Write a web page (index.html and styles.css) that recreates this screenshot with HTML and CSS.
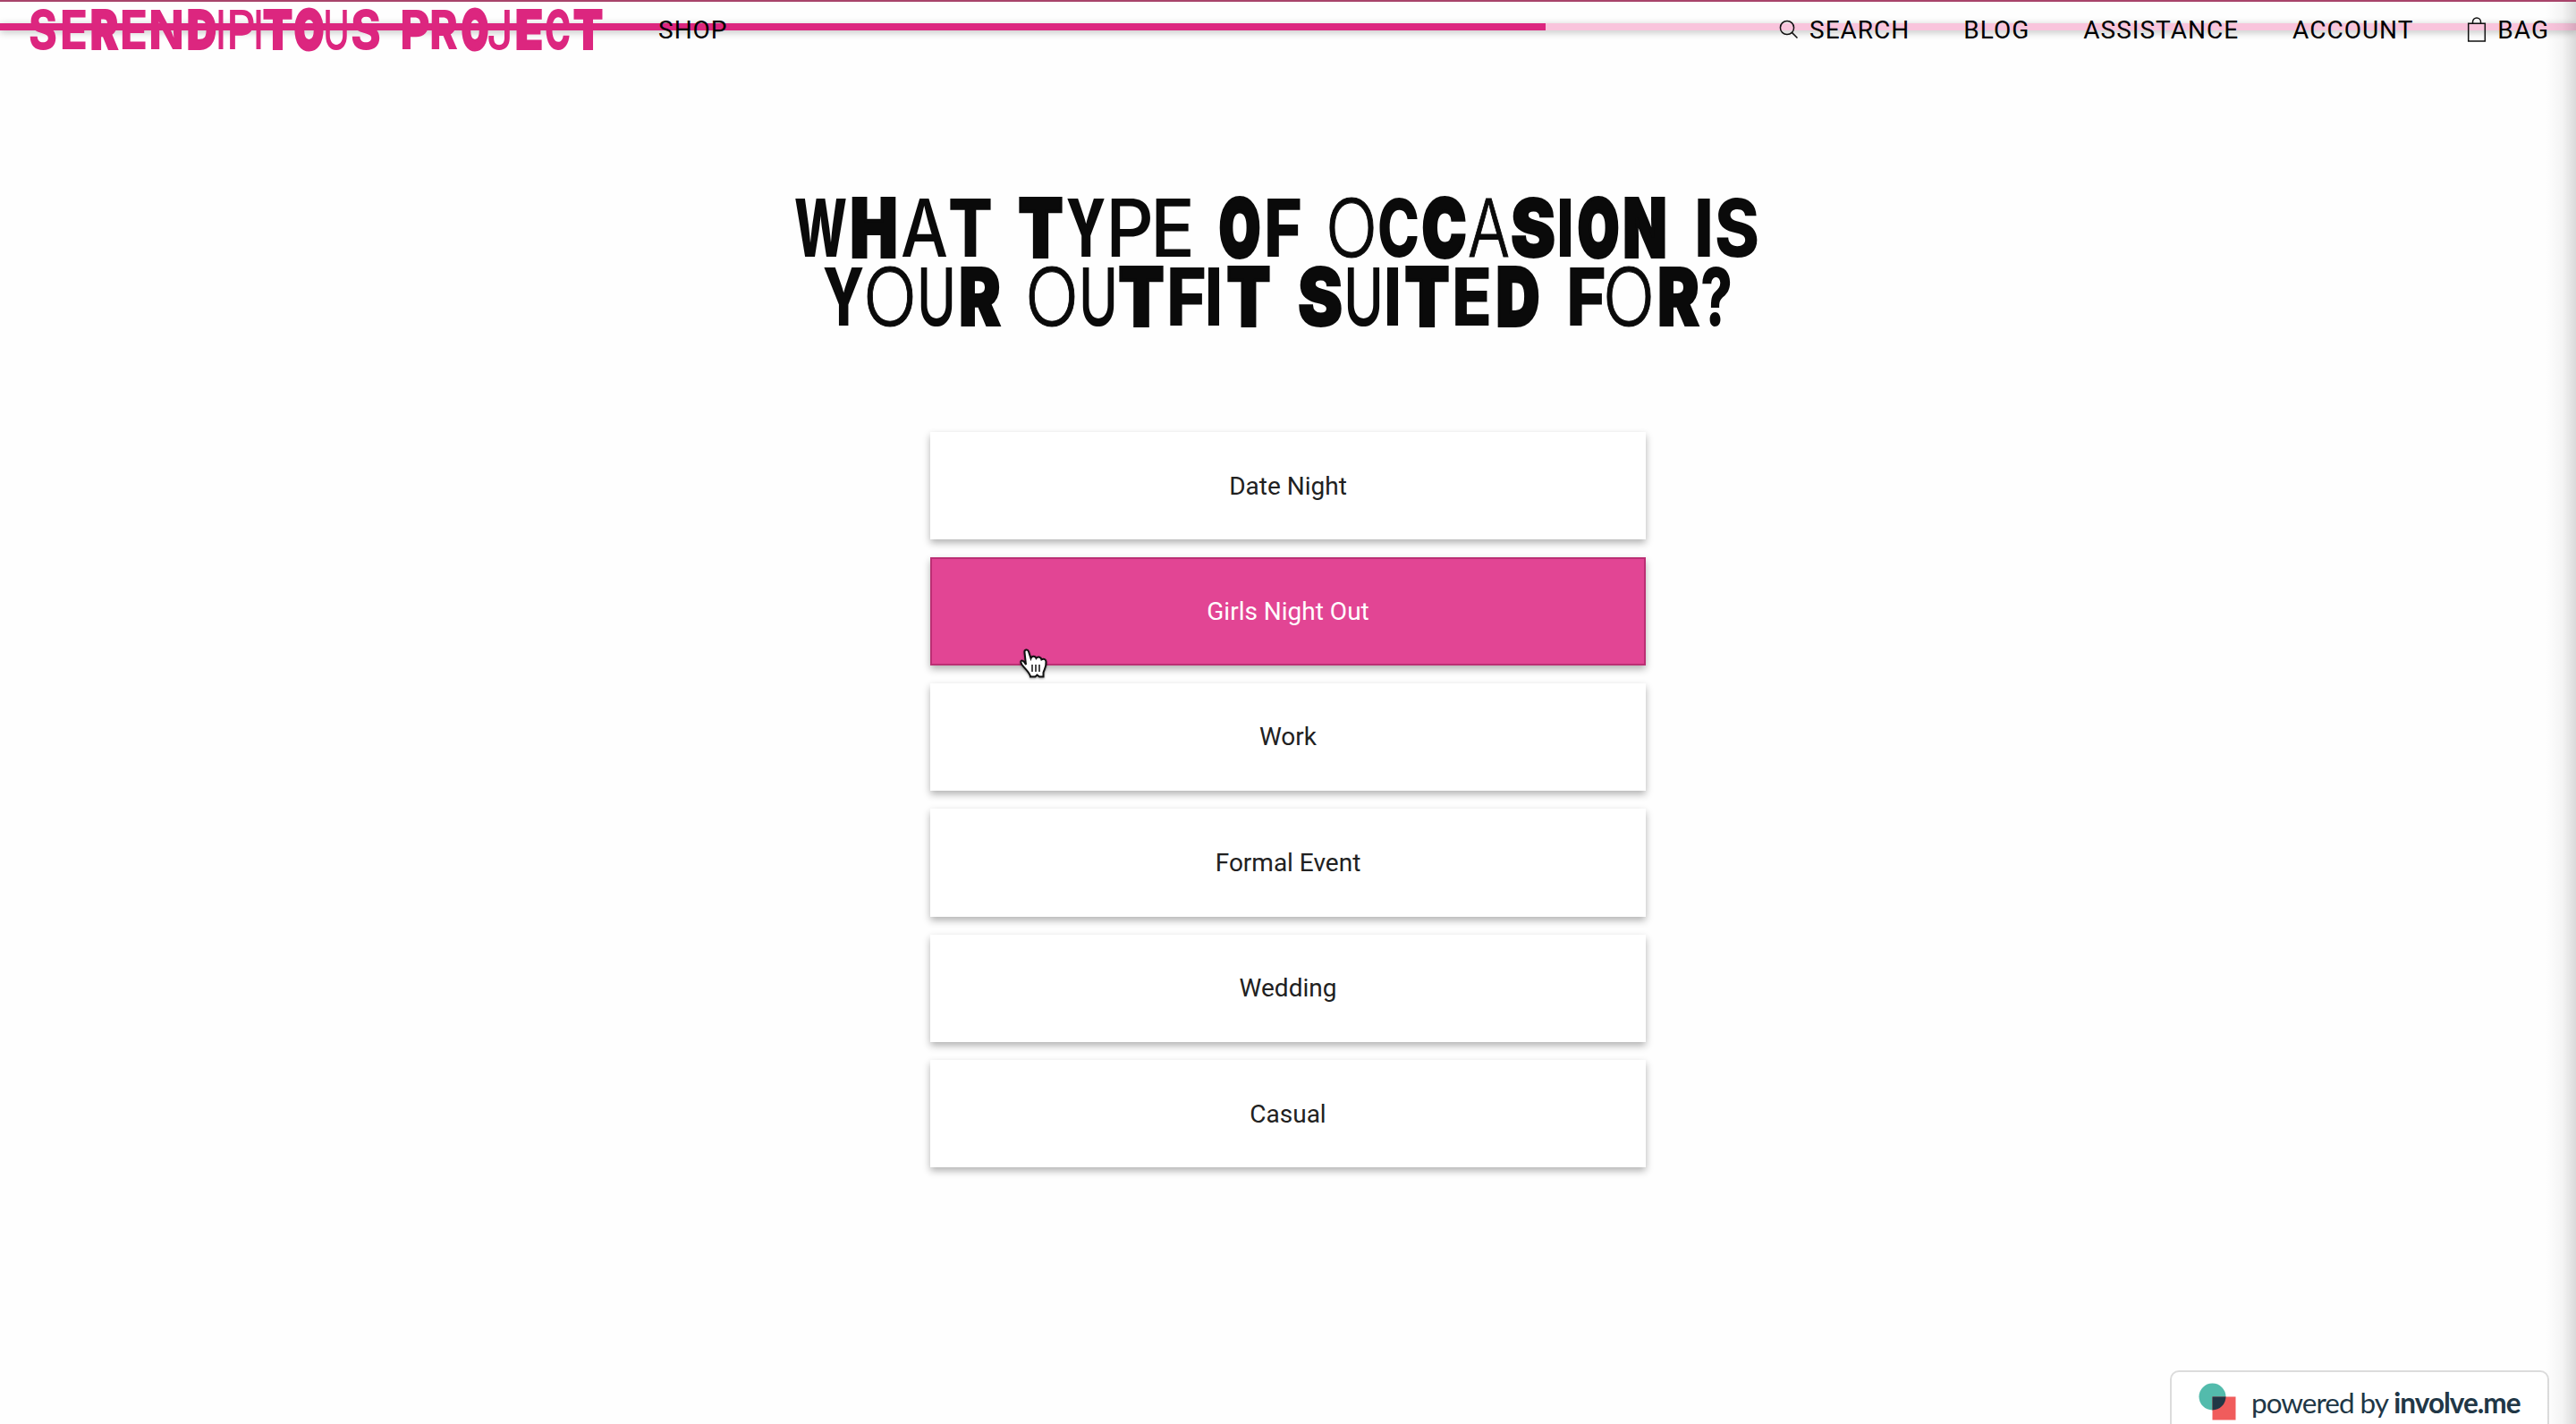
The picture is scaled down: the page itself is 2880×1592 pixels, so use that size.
FILE: index.html
```html
<!DOCTYPE html>
<html lang="en">
  <head>
    <meta charset="UTF-8" />
    <meta name="viewport" content="width=device-width, initial-scale=1.0" />
    <title>Serendipitous Project</title>
    <link rel="stylesheet" href="styles.css">
  </head>
  <body>
    <div class="progress">
      <div class="progress-value"></div>
    </div>

    <header class="navbar">
      <a class="logo" href="#">
        <svg class="lettering" width="660" height="66" viewBox="0 0 660 66">
          <text y="53">
            <tspan class="bold" x="32" textLength="32" lengthAdjust="spacingAndGlyphs">S</tspan><tspan class="bold" x="67" textLength="31" lengthAdjust="spacingAndGlyphs">E</tspan><tspan class="fat" x="101" textLength="31" lengthAdjust="spacingAndGlyphs">R</tspan><tspan class="bold" x="134" textLength="31" lengthAdjust="spacingAndGlyphs">E</tspan><tspan class="bold" x="166" textLength="40" lengthAdjust="spacingAndGlyphs">N</tspan><tspan class="fat" x="209" textLength="33" lengthAdjust="spacingAndGlyphs">D</tspan><tspan class="medium" x="241" textLength="12" lengthAdjust="spacingAndGlyphs">I</tspan><tspan class="medium" x="253" textLength="33" lengthAdjust="spacingAndGlyphs">P</tspan><tspan class="medium" x="283" textLength="12" lengthAdjust="spacingAndGlyphs">I</tspan><tspan class="fat" x="294" textLength="33" lengthAdjust="spacingAndGlyphs">T</tspan><tspan class="slab" x="329" textLength="33" lengthAdjust="spacingAndGlyphs">O</tspan><tspan class="medium" x="361" textLength="30" lengthAdjust="spacingAndGlyphs">U</tspan><tspan class="bold" x="392" textLength="34" lengthAdjust="spacingAndGlyphs">S</tspan>
            <tspan class="bold" x="447" textLength="34" lengthAdjust="spacingAndGlyphs">P</tspan><tspan class="bold" x="480" textLength="32" lengthAdjust="spacingAndGlyphs">R</tspan><tspan class="slab" x="516" textLength="30" lengthAdjust="spacingAndGlyphs">O</tspan><tspan class="medium" x="544" textLength="30" lengthAdjust="spacingAndGlyphs">J</tspan><tspan class="fat" x="576" textLength="31" lengthAdjust="spacingAndGlyphs">E</tspan><tspan class="bold" x="609" textLength="29" lengthAdjust="spacingAndGlyphs">C</tspan><tspan class="fat" x="641" textLength="33" lengthAdjust="spacingAndGlyphs">T</tspan>
          </text>
        </svg>
      </a>
      <nav class="nav-left">
        <a href="#">SHOP</a>
      </nav>
      <nav class="nav-right">
        <a href="#">
          <svg class="icon-search" width="22" height="22" viewBox="0 0 22 22">
            <circle cx="9" cy="9" r="7.6" />
            <path d="M14.4 14.4 L20.5 20.5" />
          </svg>
          SEARCH
        </a>
        <a href="#">BLOG</a>
        <a href="#">ASSISTANCE</a>
        <a href="#">ACCOUNT</a>
        <a href="#">
          <svg class="icon-bag" width="22" height="28" viewBox="0 0 22 28">
            <path d="M1.700 7.200 H20.300 V27 H1.700 Z M6.500 7 V5.500 A4.500 4.500 0 0 1 15.500 5.500 V7" />
          </svg>
          BAG
        </a>
      </nav>
    </header>

    <main class="quiz">
      <h1 class="question">
        <svg class="lettering" width="1100" height="160" viewBox="880 210 1100 160">
          <text y="287">
            <tspan class="bold" x="888" textLength="59" lengthAdjust="spacingAndGlyphs">W</tspan><tspan class="slab" x="951" textLength="52" lengthAdjust="spacingAndGlyphs">H</tspan><tspan class="medium" x="1007" textLength="53" lengthAdjust="spacingAndGlyphs">A</tspan><tspan class="bold" x="1060" textLength="50" lengthAdjust="spacingAndGlyphs">T</tspan>
            <tspan class="slab" x="1139" textLength="49" lengthAdjust="spacingAndGlyphs">T</tspan><tspan class="bold" x="1192" textLength="44" lengthAdjust="spacingAndGlyphs">Y</tspan><tspan class="medium" x="1236" textLength="54" lengthAdjust="spacingAndGlyphs">P</tspan><tspan class="medium" x="1286" textLength="50" lengthAdjust="spacingAndGlyphs">E</tspan>
            <tspan class="slab" x="1363" textLength="46" lengthAdjust="spacingAndGlyphs">O</tspan><tspan class="bold" x="1413" textLength="43" lengthAdjust="spacingAndGlyphs">F</tspan>
            <tspan class="thin" x="1482" textLength="58" lengthAdjust="spacingAndGlyphs">O</tspan><tspan class="bold" x="1540" textLength="47" lengthAdjust="spacingAndGlyphs">C</tspan><tspan class="slab" x="1590" textLength="49" lengthAdjust="spacingAndGlyphs">C</tspan><tspan class="thin" x="1641" textLength="47" lengthAdjust="spacingAndGlyphs">A</tspan><tspan class="fat" x="1689" textLength="50" lengthAdjust="spacingAndGlyphs">S</tspan><tspan class="bold" x="1740" textLength="20" lengthAdjust="spacingAndGlyphs">I</tspan><tspan class="slab" x="1764" textLength="46" lengthAdjust="spacingAndGlyphs">O</tspan><tspan class="slab" x="1815" textLength="48" lengthAdjust="spacingAndGlyphs">N</tspan>
            <tspan class="bold" x="1894" textLength="22" lengthAdjust="spacingAndGlyphs">I</tspan><tspan class="bold" x="1917" textLength="50" lengthAdjust="spacingAndGlyphs">S</tspan>
          </text>
          <text y="364">
            <tspan class="bold" x="920" textLength="46" lengthAdjust="spacingAndGlyphs">Y</tspan><tspan class="thin" x="965" textLength="60" lengthAdjust="spacingAndGlyphs">O</tspan><tspan class="medium" x="1025" textLength="44" lengthAdjust="spacingAndGlyphs">U</tspan><tspan class="fat" x="1072" textLength="47" lengthAdjust="spacingAndGlyphs">R</tspan>
            <tspan class="thin" x="1146" textLength="60" lengthAdjust="spacingAndGlyphs">O</tspan><tspan class="medium" x="1206" textLength="44" lengthAdjust="spacingAndGlyphs">U</tspan><tspan class="slab" x="1251" textLength="50" lengthAdjust="spacingAndGlyphs">T</tspan><tspan class="bold" x="1304" textLength="45" lengthAdjust="spacingAndGlyphs">F</tspan><tspan class="bold" x="1347" textLength="20" lengthAdjust="spacingAndGlyphs">I</tspan><tspan class="slab" x="1372" textLength="48" lengthAdjust="spacingAndGlyphs">T</tspan>
            <tspan class="fat" x="1451" textLength="50" lengthAdjust="spacingAndGlyphs">S</tspan><tspan class="medium" x="1502" textLength="45" lengthAdjust="spacingAndGlyphs">U</tspan><tspan class="bold" x="1547" textLength="20" lengthAdjust="spacingAndGlyphs">I</tspan><tspan class="slab" x="1571" textLength="49" lengthAdjust="spacingAndGlyphs">T</tspan><tspan class="bold" x="1623" textLength="45" lengthAdjust="spacingAndGlyphs">E</tspan><tspan class="slab" x="1673" textLength="48" lengthAdjust="spacingAndGlyphs">D</tspan>
            <tspan class="bold" x="1751" textLength="45" lengthAdjust="spacingAndGlyphs">F</tspan><tspan class="thin" x="1792" textLength="58" lengthAdjust="spacingAndGlyphs">O</tspan><tspan class="fat" x="1853" textLength="47" lengthAdjust="spacingAndGlyphs">R</tspan><tspan class="bold" x="1901" textLength="36" lengthAdjust="spacingAndGlyphs">?</tspan>
          </text>
        </svg>
      </h1>

      <div class="options">
        <div class="option">Date Night</div>
        <div class="option selected">Girls Night Out</div>
        <div class="option">Work</div>
        <div class="option">Formal Event</div>
        <div class="option">Wedding</div>
        <div class="option">Casual</div>
      </div>
    </main>

    <a class="powered" href="#">
      <svg width="42" height="42" viewBox="0 0 42 42">
        <circle cx="15.5" cy="15.5" r="15" fill="#53bbac" />
        <rect x="15.5" y="15.5" width="26" height="26" fill="#f05c5c" />
        <path d="M15.5 15.5 H30.5 A15 15 0 0 1 15.5 30.5 Z" fill="#213746" />
      </svg>
      <span>powered by <b>involve.me</b></span>
    </a>

    <div class="edge-shadow"></div>

    <svg class="cursor" width="34" height="34" viewBox="0 0 34 34">
      <path d="M8 18 L6.500 4.500 C6 1 10 0.500 11 3.500 L13.500 11 C14.500 8 18.500 8 19.500 11 C21.500 8.500 25 9.500 25.500 12.500 C28 11 30.500 12 30.500 15 C31 21 28.500 23 27.500 27 V31.500 H23 L20.500 29.500 L18.500 31.500 H13 C12.500 27 7 23 3.500 18 C1 14 3 12 6 15 Z" />
      <path class="lines" d="M15 18 V26 M19 18 V26 M23 18 V26" />
    </svg>
  </body>
</html>
```
FILE: styles.css
```css
* {
  box-sizing: border-box;
}
body {
  font-family: Roboto, Arial, sans-serif;
  font-size: 28px;
  background: #fefefe;
  color: #212121;
  height: 1592px;
  margin: 0;
  border-top: 2px solid #a8446a;
  display: flex;
  flex-direction: column;
  position: relative;
  overflow: hidden;
}
a {
  color: inherit;
  text-decoration: none;
}
.progress {
  position: absolute;
  top: 24px;
  left: 0;
  width: 100%;
  height: 8px;
  background: #f9c4dc;
  box-shadow: 0 2px 8px rgba(0, 0, 0, 0.25);
}
.progress-value {
  width: 60%;
  height: 100%;
  background: #dc267f;
}
.navbar {
  position: relative;
  display: flex;
  align-items: center;
  height: 62px;
  padding-right: 30px;
  color: #000;
  letter-spacing: 1px;
}
.logo {
  height: 62px;
}
.lettering {
  display: block;
  overflow: visible;
  font-family: Inter, Roboto, sans-serif;
  letter-spacing: 0;
}
.logo .lettering {
  font-size: 60.5px;
  fill: #dc267f;
  stroke: #dc267f;
}
.question .lettering {
  font-size: 90px;
  fill: #0a0a0a;
  stroke: #0a0a0a;
}
.thin {
  font-weight: 300;
  stroke-width: 1px;
}
.medium {
  font-weight: 500;
  stroke-width: 0;
}
.bold {
  font-weight: 800;
  stroke-width: 0;
}
.fat {
  font-weight: 900;
  stroke-width: 2px;
}
.slab {
  font-weight: 900;
  stroke-width: 4px;
}
.logo .slab {
  stroke-width: 3px;
}
.nav-left {
  margin-left: 76px;
}
.nav-right {
  display: flex;
  margin-left: auto;
  gap: 60px;
}
.nav-right a {
  display: flex;
  align-items: center;
}
.icon-search,
.icon-bag {
  fill: none;
  stroke: #111;
  stroke-width: 1.5;
  margin-right: 12px;
}
.quiz {
  display: flex;
  flex-direction: column;
  align-items: center;
  padding-top: 146px;
}
.question {
  margin: 0 20px 113px 0;
}
.options {
  display: flex;
  flex-direction: column;
  gap: 20px;
  width: 800px;
}
.option {
  display: flex;
  align-items: center;
  justify-content: center;
  height: 120.4px;
  background: #fff;
  box-shadow: 0 4px 8px rgba(0, 0, 0, 0.3);
}
.option.selected {
  background: #e24594;
  border: 2px solid #bb2f74;
  color: #fff;
}
.powered {
  display: flex;
  align-items: flex-start;
  align-self: flex-end;
  width: 424px;
  height: 70px;
  margin: auto 30px -10px 0;
  padding: 12px 0 0 30px;
  background: #fff;
  border: 2px solid #dcdcdc;
  border-radius: 10px;
  color: #213746;
  font-family: Lato, sans-serif;
  font-size: 31.5px;
  letter-spacing: -1px;
}
.powered span {
  margin: 3px 0 0 17px;
  white-space: nowrap;
}
.edge-shadow {
  position: absolute;
  top: 0;
  right: 0;
  width: 34px;
  height: 100%;
  background: linear-gradient(to right, transparent, rgba(0, 0, 0, 0.04) 55%, rgba(0, 0, 0, 0.14));
}
.cursor {
  position: absolute;
  left: 1139px;
  top: 723px;
  fill: #fff;
  stroke: #111;
  stroke-width: 2;
  filter: drop-shadow(0 1px 1px rgba(0, 0, 0, 0.4));
}
.cursor .lines {
  stroke-width: 1.5;
}
```
